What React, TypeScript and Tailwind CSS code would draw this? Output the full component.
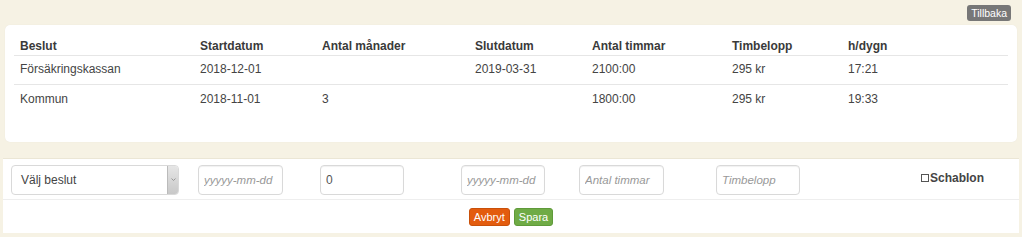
import { useState } from "react"

const cols = "grid grid-cols-[180px_122px_153px_117px_140px_116px_166px]"

const rows = [
  { beslut: "Försäkringskassan", start: "2018-12-01", months: "", end: "2019-03-31", hours: "2100:00", rate: "295 kr", perDay: "17:21" },
  { beslut: "Kommun", start: "2018-11-01", months: "3", end: "", hours: "1800:00", rate: "295 kr", perDay: "19:33" },
]

function TextInput({ placeholder, value, className }: { placeholder?: string; value?: string; className: string }) {
  return (
    <input
      defaultValue={value}
      placeholder={placeholder}
      className={`h-[30px] rounded-[4px] border border-[#d9d9d9] bg-white px-[5px] text-[12px] text-[#555] shadow-[inset_0_1px_1px_rgba(0,0,0,0.06)] outline-none placeholder:text-[11.5px] placeholder:italic placeholder:text-[#999] ${className}`}
    />
  )
}

export default function App() {
  const [schablon, setSchablon] = useState(false)

  return (
    <div className="h-[237px] w-full overflow-hidden bg-[#f6f2e4] font-['Liberation_Sans',Arial,sans-serif] text-[12px] text-[#444]">
      <div className="flex justify-end pr-[11px] pt-[5px]">
        <button className="h-[16px] rounded-[3px] bg-[#777] px-[4px] text-[10.5px] leading-[16px] text-white">Tillbaka</button>
      </div>

      <div className="mx-[5px] mt-[4px] h-[117px] rounded-[5px] bg-white px-[9px] pt-[12px] shadow-[0_0_1px_rgba(0,0,0,0.08)]">
        <div className="w-[994px]">
          <div className={`${cols} h-[19px] border-b border-[#e6e6e6] font-bold leading-[19px] text-[#3a3a3a]`}>
            <div className="px-[6px]">Beslut</div>
            <div className="px-[6px]">Startdatum</div>
            <div className="px-[6px]">Antal månader</div>
            <div className="px-[6px]">Slutdatum</div>
            <div className="px-[6px]">Antal timmar</div>
            <div className="px-[6px]">Timbelopp</div>
            <div className="px-[6px]">h/dygn</div>
          </div>
          {rows.map((r, i) => (
            <div
              key={r.beslut}
              className={`${cols} h-[29px] leading-[18px] ${i === 0 ? "border-b border-[#e6e6e6] pt-[4px]" : "pt-[5px]"}`}
            >
              <div className="px-[6px]">{r.beslut}</div>
              <div className="px-[6px]">{r.start}</div>
              <div className="px-[6px]">{r.months}</div>
              <div className="px-[6px]">{r.end}</div>
              <div className="px-[6px]">{r.hours}</div>
              <div className="px-[6px]">{r.rate}</div>
              <div className="px-[6px]">{r.perDay}</div>
            </div>
          ))}
        </div>
      </div>

      <div className="mx-[3px] mt-[16px] h-[75px] border-t border-[#ebe6d5] bg-white">
        <div className="flex h-[41px] items-center border-b border-[#eeeeee] pl-[8px] pt-[1px]">
          <div className="flex h-[30px] w-[168px] overflow-hidden rounded-[4px] border border-[#d9d9d9] bg-white">
            <div className="flex flex-1 items-center pl-[9px] text-[12px] text-[#444]">Välj beslut</div>
            <div className="flex w-[11px] items-center justify-center border-l border-[#bbb] bg-gradient-to-b from-[#e6e6e6] to-[#c8c8c8]">
              <svg width="5" height="3" viewBox="0 0 5 3">
                <path d="M0.5 0.5 L2.5 2.5 L4.5 0.5" fill="none" stroke="#888" strokeWidth="0.8" />
              </svg>
            </div>
          </div>
          <TextInput placeholder="yyyyy-mm-dd" className="ml-[19px] w-[85px]" />
          <TextInput value="0" className="ml-[37px] w-[84px]" />
          <TextInput placeholder="yyyyy-mm-dd" className="ml-[57px] w-[84px]" />
          <TextInput placeholder="Antal timmar" className="ml-[34px] w-[85px]" />
          <TextInput placeholder="Timbelopp" className="ml-[52px] w-[84px]" />
          <label className="ml-[121px] flex cursor-pointer items-center pb-[4px] font-bold text-[#444]">
            <span
              onClick={() => setSchablon(!schablon)}
              className="mr-[1px] inline-block h-[8px] w-[8px] border border-[#555] bg-white"
            >
              {schablon ? <span className="block h-full w-full bg-[#555]" /> : null}
            </span>
            Schablon
          </label>
        </div>
        <div className="flex justify-center gap-[4px] pt-[8px]">
          <button className="h-[18px] rounded-[3px] border border-[#c9500a] bg-[#e35c0e] px-[4px] text-[11px] leading-[16px] text-white">Avbryt</button>
          <button className="h-[18px] rounded-[3px] border border-[#5f9a3a] bg-[#6fab45] px-[4px] text-[11px] leading-[16px] text-white">Spara</button>
        </div>
      </div>
    </div>
  )
}
